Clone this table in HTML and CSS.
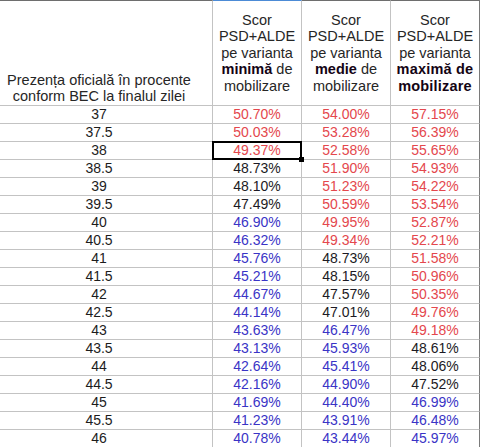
FILE: index.html
```html
<!DOCTYPE html>
<html lang="ro">
<head>
<meta charset="utf-8">
<title>Scor PSD+ALDE</title>
<link rel="stylesheet" href="styles.css">
</head>
<body>
<table class="sheet">
  <thead>
    <tr>
      <th class="lead">Prezența oficială în procente<br>conform BEC la finalul zilei</th>
      <th class="score active">Scor<br>PSD+ALDE<br>pe varianta<br><b>minimă</b> de<br>mobilizare</th>
      <th class="score">Scor<br>PSD+ALDE<br>pe varianta<br><b>medie</b> de<br>mobilizare</th>
      <th class="score last">Scor<br>PSD+ALDE<br>pe varianta<br><b class="wide">maximă de<br>mobilizare</b></th>
    </tr>
  </thead>
  <tbody>
    <tr><td class="lead">37</td><td class="hi">50.70%</td><td class="hi">54.00%</td><td class="hi last">57.15%</td></tr>
    <tr><td class="lead">37.5</td><td class="hi">50.03%</td><td class="hi">53.28%</td><td class="hi last">56.39%</td></tr>
    <tr><td class="lead">38</td><td class="hi selected">49.37%</td><td class="hi">52.58%</td><td class="hi last">55.65%</td></tr>
    <tr><td class="lead">38.5</td><td class="mid">48.73%</td><td class="hi">51.90%</td><td class="hi last">54.93%</td></tr>
    <tr><td class="lead">39</td><td class="mid">48.10%</td><td class="hi">51.23%</td><td class="hi last">54.22%</td></tr>
    <tr><td class="lead">39.5</td><td class="mid">47.49%</td><td class="hi">50.59%</td><td class="hi last">53.54%</td></tr>
    <tr><td class="lead">40</td><td class="lo">46.90%</td><td class="hi">49.95%</td><td class="hi last">52.87%</td></tr>
    <tr><td class="lead">40.5</td><td class="lo">46.32%</td><td class="hi">49.34%</td><td class="hi last">52.21%</td></tr>
    <tr><td class="lead">41</td><td class="lo">45.76%</td><td class="mid">48.73%</td><td class="hi last">51.58%</td></tr>
    <tr><td class="lead">41.5</td><td class="lo">45.21%</td><td class="mid">48.15%</td><td class="hi last">50.96%</td></tr>
    <tr><td class="lead">42</td><td class="lo">44.67%</td><td class="mid">47.57%</td><td class="hi last">50.35%</td></tr>
    <tr><td class="lead">42.5</td><td class="lo">44.14%</td><td class="mid">47.01%</td><td class="hi last">49.76%</td></tr>
    <tr><td class="lead">43</td><td class="lo">43.63%</td><td class="lo">46.47%</td><td class="hi last">49.18%</td></tr>
    <tr><td class="lead">43.5</td><td class="lo">43.13%</td><td class="lo">45.93%</td><td class="mid last">48.61%</td></tr>
    <tr><td class="lead">44</td><td class="lo">42.64%</td><td class="lo">45.41%</td><td class="mid last">48.06%</td></tr>
    <tr><td class="lead">44.5</td><td class="lo">42.16%</td><td class="lo">44.90%</td><td class="mid last">47.52%</td></tr>
    <tr><td class="lead">45</td><td class="lo">41.69%</td><td class="lo">44.40%</td><td class="lo last">46.99%</td></tr>
    <tr><td class="lead">45.5</td><td class="lo">41.23%</td><td class="lo">43.91%</td><td class="lo last">46.48%</td></tr>
    <tr><td class="lead">46</td><td class="lo">40.78%</td><td class="lo">43.44%</td><td class="lo last">45.97%</td></tr>
  </tbody>
</table>
</body>
</html>
```

FILE: styles.css
```css
html, body {
  margin: 0;
  padding: 0;
  background: #ffffff;
}

body {
  font-family: "Liberation Sans", Arial, sans-serif;
  font-size: 14px;
  color: #1c1c1c;
  overflow: hidden;
}

.sheet {
  border-collapse: separate;
  border-spacing: 0;
  table-layout: fixed;
}

.sheet th,
.sheet td {
  padding: 0;
  border-right: 1px solid #c3c3c3;
  border-bottom: 1px solid #c3c3c3;
  text-align: center;
  white-space: nowrap;
  overflow: visible;
}

.sheet th {
  height: 104px;
  font-size: 14.5px;
  font-weight: normal;
  line-height: 16.6px;
  color: #262626;
  border-top: 1px solid #6e6e6e;
}

.sheet th.lead {
  vertical-align: bottom;
  line-height: 16px;
  padding-bottom: 1px;
  height: 103px;
}

.sheet th.score {
  vertical-align: middle;
}

.sheet th.active {
  border-top-color: #4c8bd6;
}

.sheet th b {
  font-weight: bold;
  color: #140414;
}

.sheet th b.wide {
  letter-spacing: 0.2px;
}

.lead {
  width: 198px;
  padding-right: 14px !important;
}

.sheet th.score,
.sheet td:nth-child(2),
.sheet td:nth-child(3) {
  width: 88px;
}

.sheet .last {
  width: 85px;
  border-right-color: #7a7a7a;
}

.sheet td {
  height: 17px;
  line-height: 17px;
  vertical-align: middle;
}

.sheet td.lead {
  color: #1c1c1c;
}

.hi {
  color: #e4474d;
}

.mid {
  color: #1c1a24;
}

.lo {
  color: #3a34c6;
}

.selected {
  position: relative;
}

.selected::before {
  content: "";
  position: absolute;
  top: -1px;
  left: -1px;
  right: -1px;
  bottom: -1px;
  border: 2px solid #000000;
}

.selected::after {
  content: "";
  position: absolute;
  right: -3px;
  bottom: -3px;
  width: 5px;
  height: 5px;
  background: #000000;
}
```
